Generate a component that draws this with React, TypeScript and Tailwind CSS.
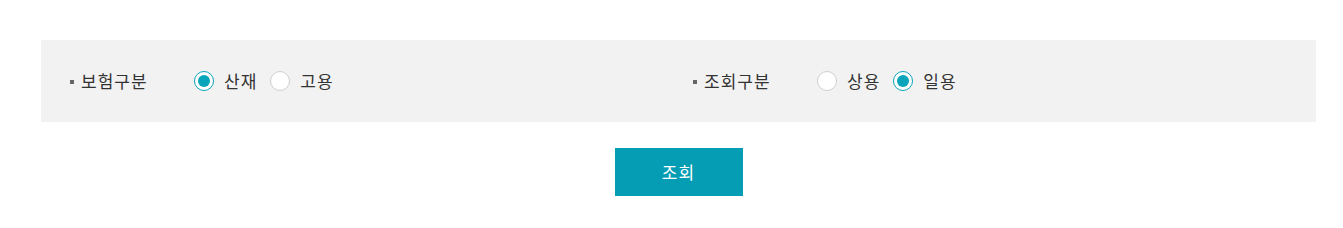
import { useState } from 'react';

type Opt = { value: string; label: string };

function Radio({ checked, label, onClick }: { checked: boolean; label: string; onClick: () => void }) {
  return (
    <label onClick={onClick} className="flex items-center cursor-pointer">
      <span
        className={`flex items-center justify-center w-[20px] h-[20px] rounded-full bg-white border ${
          checked ? 'border-[#0aa5ba]' : 'border-[#cfcfcf]'
        }`}
      >
        {checked && <span className="w-[12px] h-[12px] rounded-full bg-[#0aa5ba]" />}
      </span>
      <span className="ml-[10px] text-[17px] tracking-[1px] text-[#333]">{label}</span>
    </label>
  );
}

function Field({ title, options, value, onChange }: { title: string; options: Opt[]; value: string; onChange: (v: string) => void }) {
  return (
    <div className="flex items-center w-[624px]">
      <div className="flex items-center w-[124px]">
        <span className="w-[4px] h-[4px] bg-[#666] mr-[7px] mt-[1px]" />
        <span className="text-[17px] tracking-[1px] text-[#333]">{title}</span>
      </div>
      <div className="flex items-center gap-[13px]">
        {options.map((o) => (
          <Radio key={o.value} checked={value === o.value} label={o.label} onClick={() => onChange(o.value)} />
        ))}
      </div>
    </div>
  );
}

export default function App() {
  const [insurance, setInsurance] = useState('sanjae');
  const [kind, setKind] = useState('daily');

  return (
    <div className="w-[1343px] h-[228px] bg-white pt-[40px] font-['Noto_Sans_CJK_KR',sans-serif]">
      <div className="ml-[41px] w-[1275px]">
        <div className="h-[82px] bg-[#f2f2f2] flex items-center pl-[29px]">
          <Field
            title="보험구분"
            value={insurance}
            onChange={setInsurance}
            options={[
              { value: 'sanjae', label: '산재' },
              { value: 'goyong', label: '고용' },
            ]}
          />
          <Field
            title="조회구분"
            value={kind}
            onChange={setKind}
            options={[
              { value: 'regular', label: '상용' },
              { value: 'daily', label: '일용' },
            ]}
          />
        </div>
        <div className="flex justify-center mt-[26px]">
          <button className="w-[128px] h-[48px] bg-[#049db3] text-white text-[17px] tracking-[1px]">조회</button>
        </div>
      </div>
    </div>
  );
}
